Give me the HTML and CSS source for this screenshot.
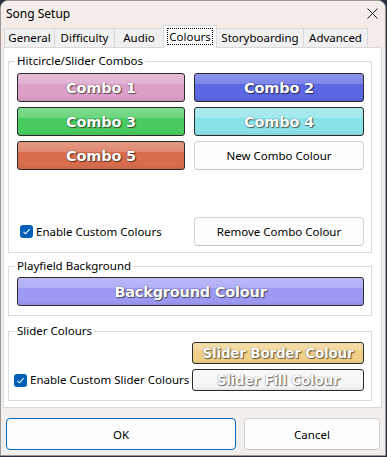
FILE: index.html
```html
<!DOCTYPE html>
<html>
<head>
<meta charset="utf-8">
<link rel="stylesheet" href="styles.css">
</head>
<body>
<div class="window">
  <div class="titlebar">
    <span class="title">Song Setup</span>
    <svg class="close" width="11" height="11" viewBox="0 0 11 11"><path d="M0.5 0.5 L10.5 10.5 M10.5 0.5 L0.5 10.5" stroke="#1a1a1a" stroke-width="1" fill="none"/></svg>
  </div>
  <div class="tabs">
    <div class="tab t-general">General</div>
    <div class="tab t-difficulty">Difficulty</div>
    <div class="tab t-audio">Audio</div>
    <div class="tab t-colours active"><span class="focus">Colours</span></div>
    <div class="tab t-story">Storyboarding</div>
    <div class="tab t-advanced">Advanced</div>
  </div>
  <div class="panel">
    <fieldset class="group combos">
      <legend>Hitcircle/Slider Combos</legend>
      <div class="combo-grid">
        <button class="colour c1">Combo 1</button>
        <button class="colour c2">Combo 2</button>
        <button class="colour c3">Combo 3</button>
        <button class="colour c4">Combo 4</button>
        <button class="colour c5">Combo 5</button>
        <button class="plain">New Combo Colour</button>
      </div>
      <div class="combo-footer">
        <label class="check"><span class="box"><svg width="9" height="9" viewBox="0 0 9 9"><path d="M1.5 4.8 L3.6 6.8 L7.6 2.2" stroke="#fff" stroke-width="1.1" fill="none"/></svg></span>Enable Custom Colours</label>
        <button class="plain">Remove Combo Colour</button>
      </div>
    </fieldset>
    <fieldset class="group playfield">
      <legend>Playfield Background</legend>
      <button class="colour bgc">Background Colour</button>
    </fieldset>
    <fieldset class="group slider">
      <legend>Slider Colours</legend>
      <div class="slider-grid">
        <button class="colour small sb">Slider Border Colour</button>
        <label class="check"><span class="box"><svg width="9" height="9" viewBox="0 0 9 9"><path d="M1.5 4.8 L3.6 6.8 L7.6 2.2" stroke="#fff" stroke-width="1.1" fill="none"/></svg></span>Enable Custom Slider Colours</label>
        <button class="colour small sf">Slider Fill Colour</button>
      </div>
    </fieldset>
  </div>
  <div class="footer">
    <button class="plain ok">OK</button>
    <button class="plain">Cancel</button>
  </div>
</div>
</body>
</html>
```

FILE: styles.css
```css
html, body {
  margin: 0;
  padding: 0;
  background: #2a2f3f;
}
body {
  width: 387px;
  height: 457px;
  overflow: hidden;
}
.window {
  width: 386px;
  height: 456px;
  box-sizing: border-box;
  border: 1px solid #9c9896;
  border-radius: 8px 8px 0 0;
  background: #f1eeec;
  font-family: "Noto Sans", "Liberation Sans", sans-serif;
  font-size: 11.5px;
  color: #000;
  display: flex;
  flex-direction: column;
  overflow: hidden;
}
.titlebar {
  height: 25px;
  flex: none;
  display: flex;
  align-items: center;
  justify-content: space-between;
  padding: 0 7px 0 5px;
  background: #f3ece9;
}
.title {
  font-size: 12px;
  line-height: 16px;
}
.close {
  display: block;
}
.tabs {
  height: 21px;
  flex: none;
  display: flex;
  align-items: flex-end;
  padding-left: 3px;
  background: #f3ece9;
}
.tab {
  height: 19px;
  box-sizing: border-box;
  padding: 0;
  border: 1px solid #d9d9d9;
  border-bottom: none;
  border-right: none;
  background: #f0f0f0;
  display: flex;
  align-items: center;
  justify-content: center;
  line-height: 16px;
  font-size: 11.5px;
  flex: none;
}
.t-general { width: 50px; }
.t-difficulty { width: 60px; }
.t-audio { width: 49px; }
.t-colours { width: 54px; }
.t-story { width: 86px; }
.t-advanced { width: 65px; border-right: 1px solid #d9d9d9; }
.tab.active {
  height: 23px;
  margin-bottom: -1px;
  padding-top: 3px;
  background: #fff;
  border-right: 1px solid #d9d9d9;
  position: relative;
  z-index: 1;
  align-items: flex-start;
}
.tab.active + .tab {
  border-left: none;
}
.focus {
  outline: 1px dotted #000;
  padding: 0 1px;
  line-height: 15px;
}
.panel {
  flex: none;
  margin: 0 3px 0 2px;
  background: #fff;
  border: 1px solid #d9d9d9;
  padding: 5px 9px 6px 4px;
  display: flex;
  flex-direction: column;
}
.group {
  margin: 0;
  border: 1px solid #dcdcdc;
  padding: 4px 7px 6px 8px;
  min-width: 0;
}
.group legend {
  padding: 0 2px;
  margin-left: -2px;
  line-height: 16px;
  font-size: 11.5px;
}
.playfield {
  margin-top: 5px;
  padding: 3px 7px 9px 8px;
}
.slider {
  margin-top: 7px;
  padding: 3px 7px 9px 8px;
}
button {
  font-family: inherit;
  margin: 0;
  cursor: default;
}
.combo-grid {
  display: grid;
  grid-template-columns: 168px 170px;
  column-gap: 9px;
  row-gap: 5px;
  grid-auto-rows: 29px;
}
.combo-footer {
  margin-top: 47px;
  display: grid;
  grid-template-columns: 168px 170px;
  column-gap: 9px;
  grid-auto-rows: 29px;
  align-items: center;
}
.combo-footer .check {
  margin-left: 3px;
}
.plain {
  height: 100%;
  background: #fdfdfd;
  border: 1px solid #d3d3d3;
  border-bottom-color: #c2c2c2;
  border-radius: 4px;
  font-size: 11.5px;
  color: #000;
  padding: 0;
}
.colour {
  height: 29px;
  width: 100%;
  border: 1px solid #2b2b2b;
  border-radius: 3px;
  padding: 0;
  font-family: "DejaVu Sans", sans-serif;
  font-weight: bold;
  font-size: 14.5px;
  letter-spacing: -0.2px;
  color: #fff;
  text-shadow: 1px 1px 1px rgba(0,0,0,0.55), 0 0 1px rgba(0,0,0,0.6);
  background-image: linear-gradient(to bottom, rgba(255,255,255,0.30) 0, rgba(255,255,255,0.20) 36%, rgba(255,255,255,0) 37%, rgba(255,255,255,0) 82%, rgba(0,0,0,0.07) 100%);
}
.colour.small {
  height: 22px;
  font-size: 13.5px;
}
.c1 { background-color: #dc9fc7; }
.c2 { background-color: #5c67e4; }
.c3 { background-color: #48cb5f; }
.c4 { background-color: #8ae3e8; }
.c5 { background-color: #d86d4e; }
.bgc { background-color: #9e9af4; }
.sb { background-color: #f0cf86; }
.sf { background-color: #f6f6f6; }
.check {
  display: flex;
  align-items: center;
  gap: 3px;
  font-size: 11.5px;
  line-height: 16px;
}
.box {
  width: 13px;
  height: 13px;
  border-radius: 3px;
  background: #005fb8;
  display: flex;
  align-items: center;
  justify-content: center;
  flex: none;
}
.box svg {
  display: block;
}
.slider-grid {
  display: grid;
  grid-template-columns: minmax(0, 1fr) 172px;
  grid-template-rows: 22px 22px;
  row-gap: 5px;
  column-gap: 3px;
  align-items: center;
}
.slider-grid .sb {
  grid-column: 2;
  grid-row: 1;
}
.slider-grid .check {
  grid-column: 1;
  grid-row: 2;
  margin-left: -3px;
  white-space: nowrap;
}
.slider-grid .sf {
  grid-column: 2;
  grid-row: 2;
}
.footer {
  flex: 1;
  display: grid;
  grid-template-columns: 1fr 136px;
  column-gap: 8px;
  padding: 10px 5px 0 5px;
  align-items: start;
}
.footer .plain {
  height: 32px;
}
.footer .ok {
  border-color: #0067c0;
}
```
